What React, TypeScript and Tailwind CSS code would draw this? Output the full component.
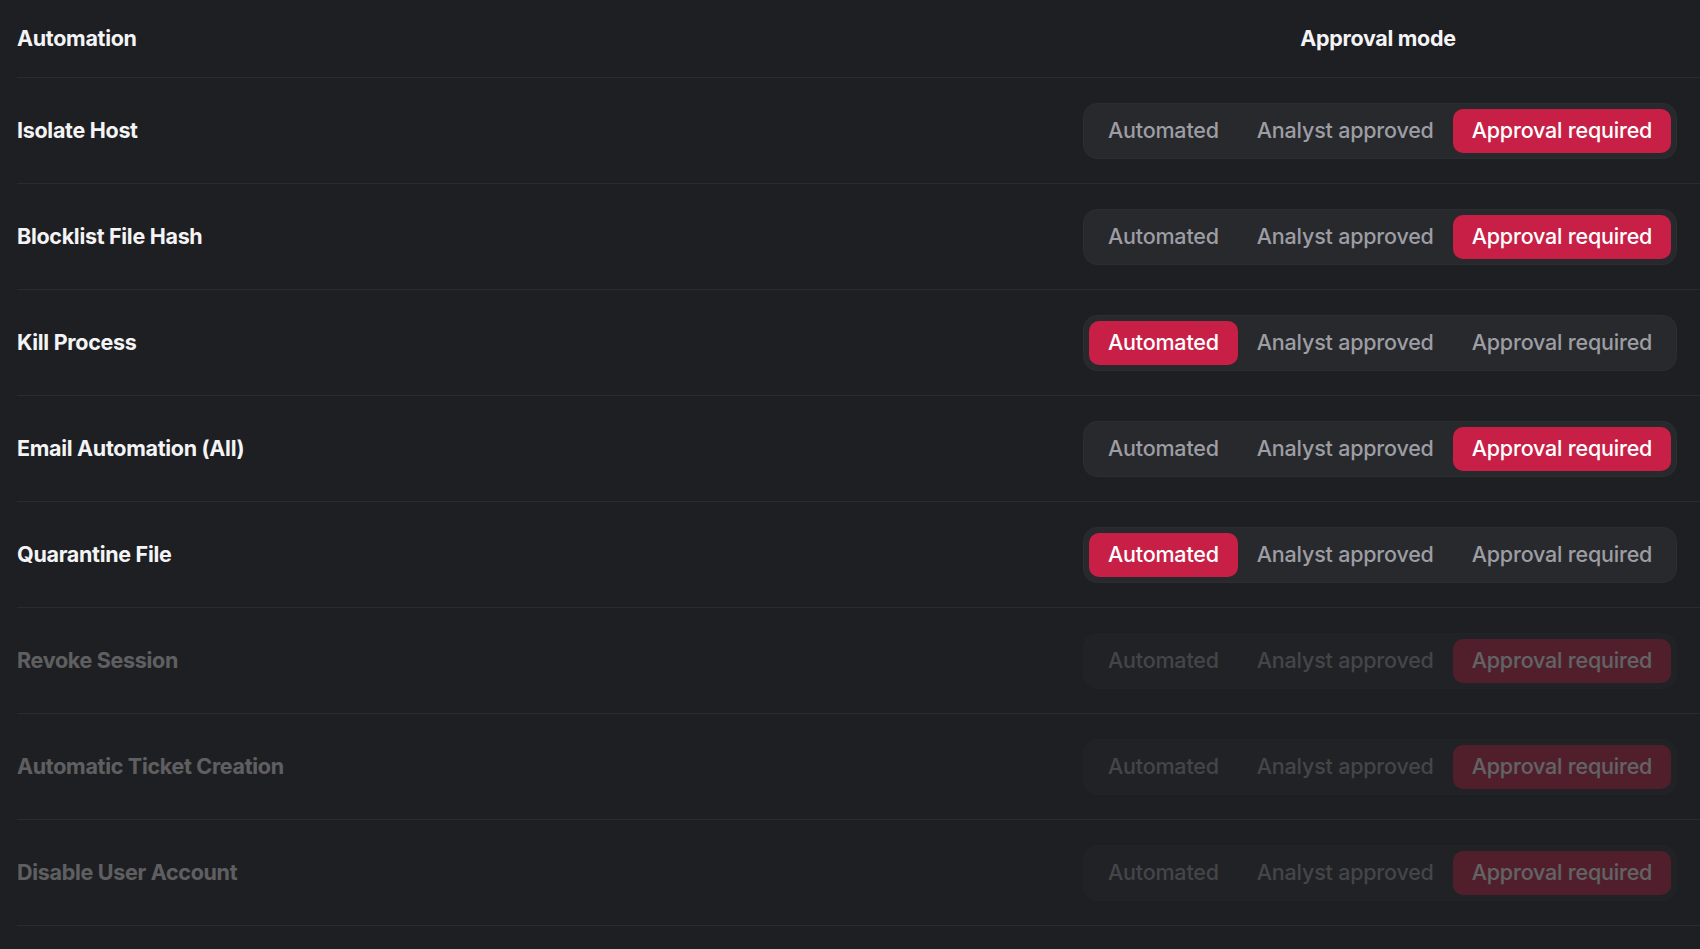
type Mode = "automated" | "analyst" | "required";

const OPTIONS: { value: Mode; label: string }[] = [
  { value: "automated", label: "Automated" },
  { value: "analyst", label: "Analyst approved" },
  { value: "required", label: "Approval required" },
];

const ROWS: { name: string; mode: Mode; disabled?: boolean }[] = [
  { name: "Isolate Host", mode: "required" },
  { name: "Blocklist File Hash", mode: "required" },
  { name: "Kill Process", mode: "automated" },
  { name: "Email Automation (All)", mode: "required" },
  { name: "Quarantine File", mode: "automated" },
  { name: "Revoke Session", mode: "required", disabled: true },
  { name: "Automatic Ticket Creation", mode: "required", disabled: true },
  { name: "Disable User Account", mode: "required", disabled: true },
];

function ModeSwitch({ mode }: { mode: Mode }) {
  return (
    <div className="flex w-fit rounded-[14px] border border-[#2c2d31] bg-[#28292c] p-[5px]">
      {OPTIONS.map((opt) => {
        const active = opt.value === mode;
        return (
          <button
            key={opt.value}
            type="button"
            className={`h-[44px] rounded-[10px] px-[19px] text-[21.5px] font-medium tracking-[-0.2px] ${
              active ? "bg-[#c81f46] text-white" : "text-[#9d9da4]"
            }`}
          >
            {opt.label}
          </button>
        );
      })}
    </div>
  );
}

export default function App() {
  return (
    <div
      className="min-h-screen bg-[#1e1f22] pl-[17px] text-[#f4f4f6]"
      style={{ fontFamily: "Inter, 'Noto Sans', sans-serif" }}
    >
      <div className="flex h-[78px] items-center border-b border-[#2a2b2f]">
        <div className="flex-1 text-[21.5px] font-bold tracking-[-0.3px]">Automation</div>
        <div className="w-[617px]">
          <div className="w-[590px] text-center text-[21.5px] font-bold tracking-[-0.3px]">
            Approval mode
          </div>
        </div>
      </div>

      {ROWS.map((row) => (
        <div
          key={row.name}
          className="flex h-[106px] items-center border-b border-[#2a2b2f]"
        >
          <div className={`flex flex-1 items-center ${row.disabled ? "opacity-30" : ""}`}>
            <div className="flex-1 text-[21.5px] font-bold tracking-[-0.3px]">{row.name}</div>
            <div className="w-[617px]">
              <ModeSwitch mode={row.mode} />
            </div>
          </div>
        </div>
      ))}
    </div>
  );
}
